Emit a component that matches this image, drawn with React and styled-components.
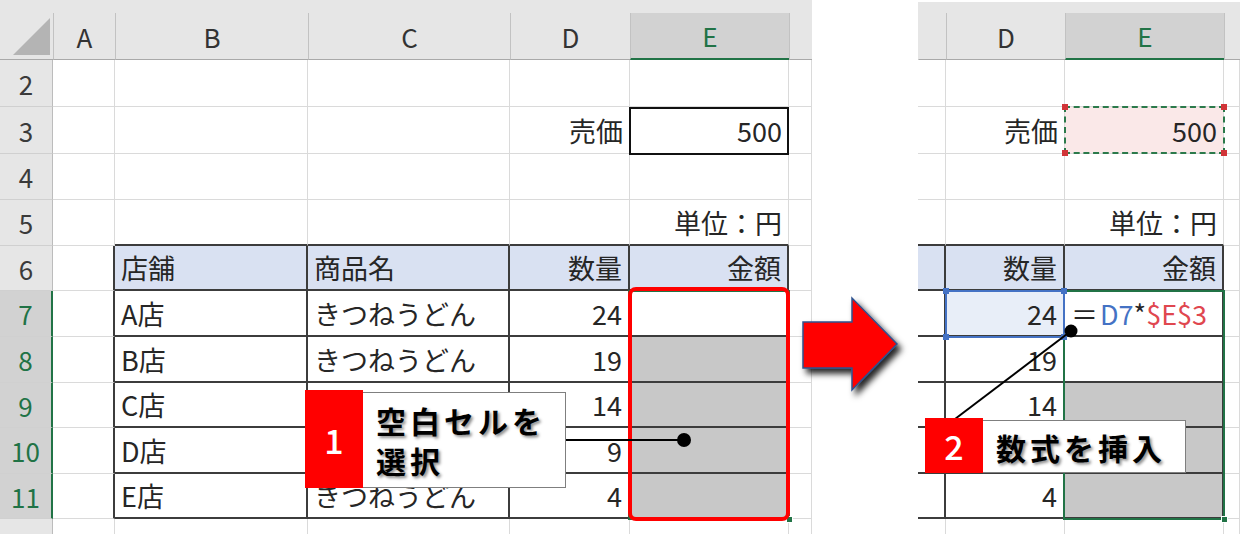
import React from 'react';
import styled, { createGlobalStyle } from 'styled-components';

const FONT = '"Noto Sans CJK JP", "Noto Sans", sans-serif';

const GlobalStyle = createGlobalStyle`
  html, body { margin: 0; padding: 0; background: #fff; }
  body { font-family: ${FONT}; }
  *, *::before, *::after { box-sizing: border-box; }
`;

const ROWS = [
  { n: 2, h: 47 }, { n: 3, h: 47 }, { n: 4, h: 46 }, { n: 5, h: 46 }, { n: 6, h: 45 },
  { n: 7, h: 46 }, { n: 8, h: 46 }, { n: 9, h: 45 }, { n: 10, h: 46 }, { n: 11, h: 45 }, { n: 12, h: 46 },
];

const BLUE_FILL = '#d9e1f2';
const GRAY_FILL = '#c8c8c8';
const DARK = '#3c3c3c';
const GRID = '#dadada';
const GREEN = '#217346';

const Page = styled.div`
  position: relative;
  width: 1240px;
  height: 534px;
  overflow: hidden;
  display: flex;
  align-items: flex-start;
  gap: 106px;
  background: #fff;
  font-family: ${FONT};
`;

const Sheet = styled.div`
  flex: none;
  display: grid;
  grid-template-columns: ${(p) => p.$cols.map((c) => `${c.w}px`).join(' ')};
  grid-template-rows: 60px ${ROWS.map((r) => `${r.h}px`).join(' ')};
  position: relative;
`;

const ColHeadWrap = styled.div`
  grid-row: 1;
  grid-column: ${(p) => p.$c};
  background: #e6e6e6;
  border-top: ${(p) => (p.$inset ? '2px solid #fff' : 'none')};
  padding-top: ${(p) => (p.$inset ? '11px' : '13px')};
  display: flex;
`;

const ColHeadFace = styled.div`
  flex: 1;
  display: flex;
  align-items: center;
  justify-content: center;
  font-size: 26px;
  color: ${(p) => (p.$sel ? GREEN : '#333')};
  background: ${(p) => (p.$sel ? '#d2d2d2' : '#e6e6e6')};
  border-left: 1px solid ${(p) => (p.$line ? '#c2c2c2' : 'transparent')};
  border-bottom: ${(p) => (p.$sel ? `2px solid ${GREEN}` : '1px solid #a9a9a9')};
`;

const CornerFace = styled.div`
  flex: 1;
  display: flex;
  align-items: flex-end;
  justify-content: flex-end;
  padding: 0 3px 4px 0;
  border-bottom: 1px solid #a9a9a9;
`;

const Triangle = styled.div`
  width: 37px;
  height: 37px;
  background: #b4b4b4;
  clip-path: polygon(100% 0, 100% 100%, 0 100%);
`;

const RowHead = styled.div`
  grid-row: ${(p) => p.$r};
  grid-column: 1;
  display: flex;
  align-items: ${(p) => (p.$cut ? 'flex-start' : 'center')};
  padding-top: ${(p) => (p.$cut ? '6px' : '0')};
  justify-content: center;
  font-size: 26px;
  color: ${(p) => (p.$sel ? GREEN : '#3a3a3a')};
  background: ${(p) => (p.$sel ? '#d2d2d2' : '#e6e6e6')};
  border-right: ${(p) => (p.$sel ? `2px solid ${GREEN}` : '1px solid #bcbcbc')};
  border-bottom: 1px solid #d0d0d0;
`;

const Cell = styled.div`
  grid-row: ${(p) => p.$r};
  grid-column: ${(p) => p.$c};
  display: flex;
  align-items: center;
  justify-content: ${(p) => (p.$align === 'right' ? 'flex-end' : 'flex-start')};
  padding: 0 ${(p) => (p.$align === 'right' ? '6px' : '0')} 0 ${(p) => (p.$align === 'right' ? '0' : '6px')};
  font-size: 27px;
  color: #262626;
  white-space: nowrap;
  overflow: hidden;
  background: ${(p) => p.$fill || '#fff'};
  border-right: ${(p) => (p.$rDark ? `2px solid ${DARK}` : `1px solid ${GRID}`)};
  border-bottom: ${(p) => (p.$bDark ? `2px solid ${DARK}` : `1px solid ${GRID}`)};
`;

const Ref = styled.span`
  color: ${(p) => p.$color};
`;

const Eq = styled.span`
  margin-right: 2px;
`;

const Area = styled.div`
  grid-area: ${(p) => p.$area};
  position: relative;
  pointer-events: none;
  z-index: 2;
`;

const RangeBox = styled(Area)`
  margin: -1px -1px -1px -2px;
  border: 2px solid ${GREEN};
  &::after {
    content: '';
    position: absolute;
    right: -5px;
    bottom: -5px;
    width: 7px;
    height: 7px;
    background: ${GREEN};
    border: 1px solid #fff;
  }
`;

const RedFrame = styled(Area)`
  margin: -4px -1px -2px -2px;
  border: 4px solid #ff0000;
  border-radius: 8px;
  z-index: 3;
`;

const ThickBox = styled(Area)`
  margin: 0 0 -1px -1px;
  border: 2px solid #111;
`;

const Marquee = styled(Area)`
  margin: -1px -1px 0 -1px;
  border: 2px dashed #2b7a4b;
`;

const SelBox = styled(Area)`
  margin: -1px 0 -1px -1px;
  border: 2px solid #4472c4;
`;

const Handle = styled.span`
  position: absolute;
  width: 6px;
  height: 6px;
  background: ${(p) => p.$color};
  ${(p) => (p.$pos.includes('t') ? 'top: -4px;' : 'bottom: -4px;')}
  ${(p) => (p.$pos.includes('l') ? 'left: -4px;' : 'right: -4px;')}
`;

const Handles = ({ color }) => (
  <>
    {['tl', 'tr', 'bl', 'br'].map((pos) => (
      <Handle key={pos} $pos={pos} $color={color} />
    ))}
  </>
);

const Callout = styled.div`
  position: absolute;
  left: ${(p) => p.$x}px;
  top: ${(p) => p.$y}px;
  display: flex;
  align-items: flex-end;
  z-index: 6;
`;

const Badge = styled.div`
  width: 58px;
  height: ${(p) => p.$h}px;
  background: #ff0000;
  color: #fff;
  display: flex;
  align-items: center;
  justify-content: center;
  font-size: 34px;
  font-weight: 500;
`;

const Note = styled.div`
  width: ${(p) => p.$w}px;
  height: ${(p) => p.$h}px;
  background: #fff;
  border: 1px solid #7f7f7f;
  border-left: none;
  padding-left: 13px;
  display: flex;
  align-items: center;
  color: #000;
  font-size: 30px;
  font-weight: 700;
  letter-spacing: 4px;
  line-height: 40px;
  text-shadow: 2px 2px 3px rgba(0, 0, 0, 0.45);
`;

const Drawing = styled.svg`
  position: absolute;
  left: 0;
  top: 0;
  z-index: 5;
  pointer-events: none;
`;

/* ---------- data ---------- */

const SHOPS = ['A店', 'B店', 'C店', 'D店', 'E店'];
const QTY = ['24', '19', '14', '9', '4'];

function commonCell(col, row) {
  if (col === 'D' && row === 3) return { text: '売価', align: 'right' };
  if (col === 'E' && row === 3) return { text: '500', align: 'right' };
  if (col === 'E' && row === 5) return { text: '単位：円', align: 'right' };
  if (col === 'D' && row === 6) return { text: '数量', align: 'right', fill: BLUE_FILL };
  if (col === 'E' && row === 6) return { text: '金額', align: 'right', fill: BLUE_FILL };
  if (col === 'D' && row >= 7 && row <= 11) return { text: QTY[row - 7], align: 'right' };
  return null;
}

const LEFT = {
  cols: [
    { k: '#', w: 53 }, { k: 'A', w: 62 }, { k: 'B', w: 193 }, { k: 'C', w: 202 },
    { k: 'D', w: 120 }, { k: 'E', w: 159 }, { k: 'F', w: 23, label: '' },
  ],
  inset: false,
  selCol: 'E',
  selRows: [7, 8, 9, 10, 11],
  tableCols: ['B', 'C', 'D', 'E'],
  beforeTable: 'A',
  cell(col, row) {
    const c = commonCell(col, row);
    if (c) return c;
    if (col === 'B' && row === 6) return { text: '店舗', fill: BLUE_FILL };
    if (col === 'C' && row === 6) return { text: '商品名', fill: BLUE_FILL };
    if (col === 'B' && row >= 7 && row <= 11) return { text: SHOPS[row - 7] };
    if (col === 'C' && row >= 7 && row <= 11) return { text: 'きつねうどん' };
    if (col === 'E' && row >= 8 && row <= 11) return { fill: GRAY_FILL };
    return {};
  },
};

const Formula = () => (
  <>
    <Eq>＝</Eq>
    <Ref $color="#4472c4">D7</Ref>
    <span>*</span>
    <Ref $color="#e0474f">$E$3</Ref>
  </>
);

const RIGHT = {
  cols: [
    { k: 'C', w: 28, label: '', noLine: true }, { k: 'D', w: 119 }, { k: 'E', w: 159 }, { k: 'F', w: 16, label: '' },
  ],
  inset: true,
  selCol: 'E',
  selRows: [],
  tableCols: ['C', 'D', 'E'],
  beforeTable: null,
  cell(col, row) {
    if (col === 'E' && row === 3) return { text: '500', align: 'right', fill: '#fae8e8' };
    if (col === 'D' && row === 7) return { text: '24', align: 'right', fill: '#e8eef8' };
    const c = commonCell(col, row);
    if (c) return c;
    if (col === 'C' && row === 6) return { fill: BLUE_FILL };
    if (col === 'E' && row === 7) return { node: <Formula /> };
    if (col === 'E' && row >= 9 && row <= 11) return { fill: GRAY_FILL };
    return {};
  },
};

function SheetView({ def, children }) {
  const items = [];
  def.cols.forEach((c, i) => {
    if (c.k === '#') {
      items.push(
        <ColHeadWrap key="corner" $c={i + 1} $inset={def.inset}>
          <CornerFace>
            <Triangle />
          </CornerFace>
        </ColHeadWrap>
      );
    } else {
      items.push(
        <ColHeadWrap key={`h${c.k}`} $c={i + 1} $inset={def.inset}>
          <ColHeadFace $sel={c.k === def.selCol} $line={!c.noLine}>
            {c.label ?? c.k}
          </ColHeadFace>
        </ColHeadWrap>
      );
    }
  });
  ROWS.forEach((r) => {
    def.cols.forEach((c, i) => {
      if (c.k === '#') {
        items.push(
          <RowHead key={`r${r.n}`} $r={r.n} $sel={def.selRows.includes(r.n)} $cut={r.n === 12}>
            {r.n}
          </RowHead>
        );
        return;
      }
      const spec = def.cell(c.k, r.n) || {};
      const inTable = def.tableCols.includes(c.k);
      const rDark = (inTable && r.n >= 6 && r.n <= 11) || (c.k === def.beforeTable && r.n >= 6 && r.n <= 11);
      const bDark = inTable && r.n >= 5 && r.n <= 11;
      items.push(
        <Cell
          key={`${c.k}${r.n}`}
          $r={r.n}
          $c={i + 1}
          $align={spec.align}
          $fill={spec.fill}
          $rDark={rDark}
          $bDark={bDark}
        >
          {spec.node || spec.text}
        </Cell>
      );
    });
  });
  return (
    <Sheet $cols={def.cols}>
      {items}
      {children}
    </Sheet>
  );
}

export default function App() {
  return (
    <>
      <GlobalStyle />
      <Page>
        <SheetView def={LEFT}>
          <ThickBox $area="3 / 6 / 4 / 7" />
          <RangeBox $area="7 / 6 / 12 / 7" />
          <RedFrame $area="7 / 6 / 12 / 7" />
        </SheetView>
        <SheetView def={RIGHT}>
          <Marquee $area="3 / 3 / 4 / 4">
            <Handles color="#d13438" />
          </Marquee>
          <RangeBox $area="7 / 3 / 12 / 4" />
          <SelBox $area="7 / 2 / 8 / 3">
            <Handles color="#4472c4" />
          </SelBox>
        </SheetView>

        <Drawing width="1240" height="534" viewBox="0 0 1240 534">
          <defs>
            <filter id="arrowShadow" x="-20%" y="-20%" width="150%" height="150%">
              <feDropShadow dx="4" dy="5" stdDeviation="3" floodColor="#000" floodOpacity="0.85" />
            </filter>
          </defs>
          <line x1="566" y1="440" x2="684" y2="440" stroke="#000" strokeWidth="2" />
          <circle cx="684" cy="440" r="7" fill="#000" />
          <line x1="955" y1="419" x2="1071" y2="331" stroke="#000" strokeWidth="2" />
          <circle cx="1071" cy="331" r="6.5" fill="#000" />
          <polygon
            points="803,322 852,322 852,298 897,344 852,390 852,368 803,368"
            fill="#ff0000"
            stroke="#2f528f"
            strokeWidth="1.5"
            strokeLinejoin="miter"
            filter="url(#arrowShadow)"
          />
        </Drawing>

        <Callout $x={305} $y={390}>
          <Badge $h={98}>1</Badge>
          <Note $w={203} $h={96}>
            空白セルを
            <br />
            選択
          </Note>
        </Callout>
        <Callout $x={925} $y={418}>
          <Badge $h={55}>2</Badge>
          <Note $w={203} $h={53}>数式を挿入</Note>
        </Callout>
      </Page>
    </>
  );
}
